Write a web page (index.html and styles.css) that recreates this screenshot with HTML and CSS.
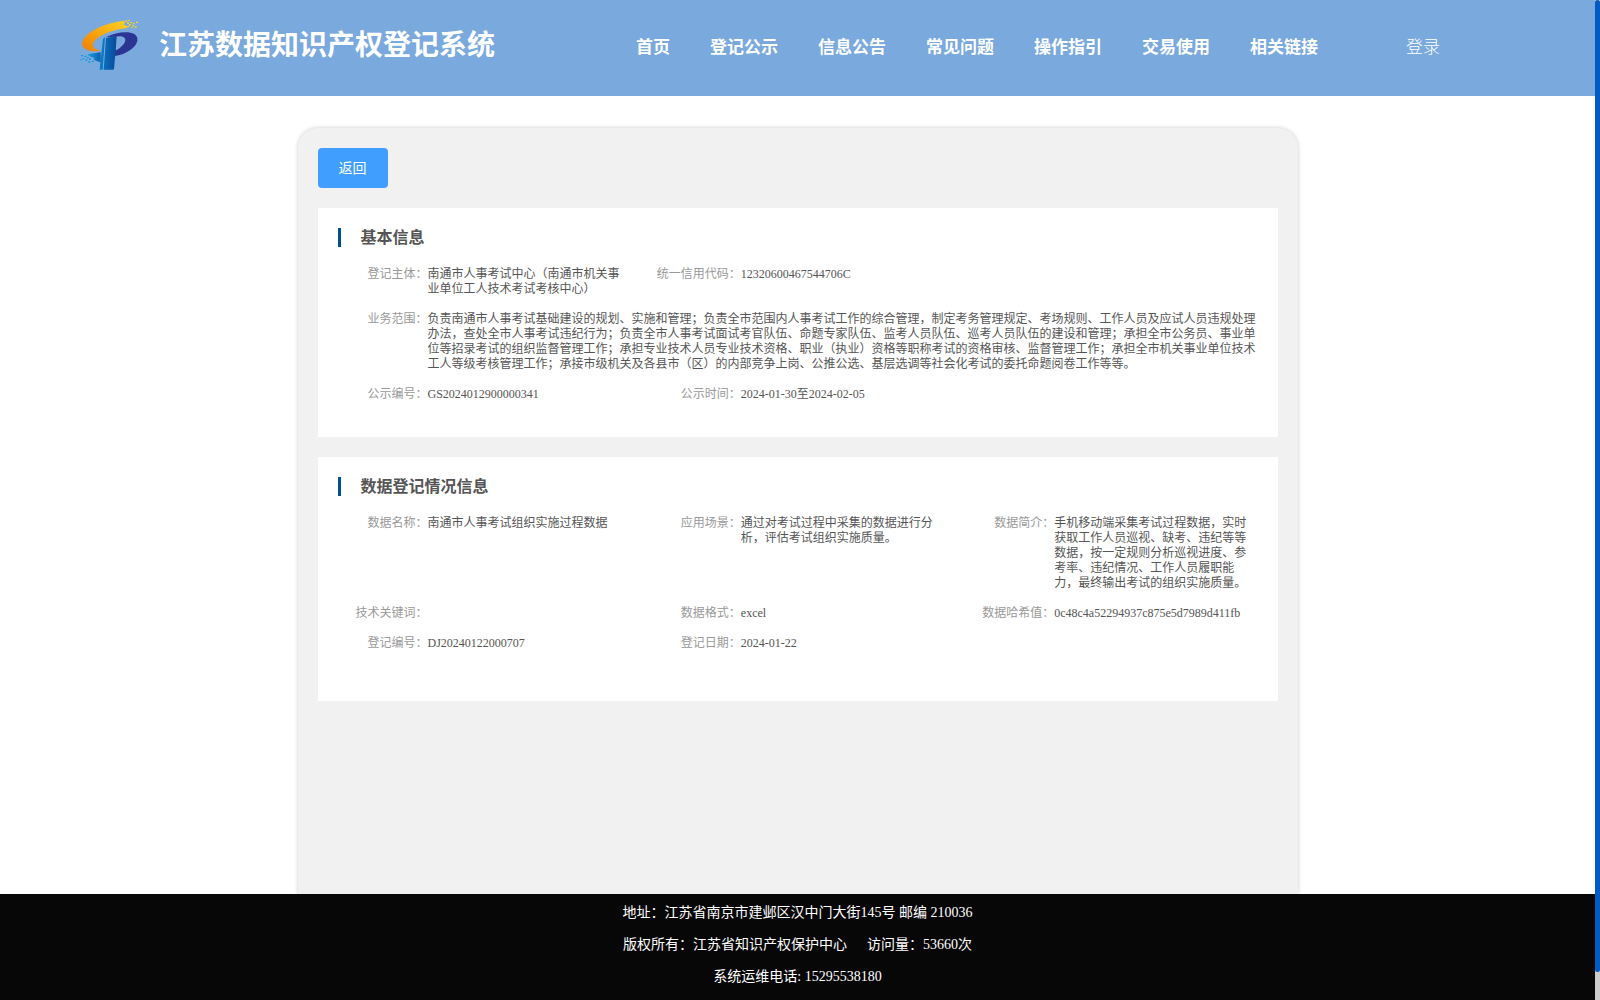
FILE: index.html
```html
<!DOCTYPE html>
<html lang="zh-CN">
<head>
    <meta charset="UTF-8">
    <meta name="viewport" content="width=device-width, initial-scale=1.0">
    <title>江苏数据知识产权登记系统</title>
    <link rel="stylesheet" href="styles.css">
</head>
<body>
    <header class="header">
        <svg class="logo" viewBox="30 28 180 156" aria-hidden="true">
            <defs>
                <linearGradient id="orange" x1="0" y1="1" x2="1" y2="0">
                    <stop offset="0" stop-color="#f07d00"/>
                    <stop offset="1" stop-color="#ffd320"/>
                </linearGradient>
                <linearGradient id="blue" x1="0" y1="0" x2="1" y2="0">
                    <stop offset="0" stop-color="#0a6fbb"/>
                    <stop offset="1" stop-color="#0a4a9c"/>
                </linearGradient>
                <linearGradient id="tail" x1="0" y1="0" x2="1" y2="0">
                    <stop offset="0" stop-color="#16a0e0"/>
                    <stop offset="1" stop-color="#0860ae"/>
                </linearGradient>
            </defs>
            <path fill="url(#orange)" d="M162 33 C112 38 46 64 37 97 C31 118 62 130 92 123 C66 119 62 102 80 87 C100 71 132 60 172 55 L168 47 L160 45 L165 39 Z"/>
            <path fill="#ffd21e" d="M166 32h6v4h-6zM175 30h5v4h-5zM171 38h6v4h-6zM181 37h6v4h-6zM189 40h5v4h-5zM176 43h6v5h-6zM187 46h5v4h-5zM198 36h6v4h-6zM194 50h6v4h-6zM170 49h7v4h-7zM183 51h5v3h-5z"/>
            <path fill="url(#tail)" d="M52 134 L92 128 L92 158 C84 156 76 153 69 149 L75 145 L64 142 L58 139 Z"/>
            <path fill="#169bdb" d="M33 136h6v4h-6zM43 138h6v4h-6zM37 145h5v4h-5zM50 142h6v4h-6zM30 149h5v3h-5zM46 149h6v4h-6zM57 146h6v5h-6zM55 155h6v4h-6zM66 153h5v4h-5z"/>
            <path fill="#0a78c4" d="M99 87 L105 83 L98 180 L89 180 Z"/>
            <path fill="#2c3594" d="M109 82 C135 68 170 64 188 71 C210 80 206 104 182 120 C168 130 151 137 133 139 L136 117 L139 122 C156 112 172 95 164 85 C159 79 150 79 139 81 Z"/>
            <path fill="url(#blue)" d="M108 84 L140 80 L138 110 L132 177 Q132 180 128 180 L101 180 Z"/>
        </svg>
        <div class="site-name">江苏数据知识产权登记系统</div>
        <nav class="nav">
            <a href="#">首页</a>
            <a href="#">登记公示</a>
            <a href="#">信息公告</a>
            <a href="#">常见问题</a>
            <a href="#">操作指引</a>
            <a href="#">交易使用</a>
            <a href="#">相关链接</a>
        </nav>
        <a class="login" href="#">登录</a>
    </header>

    <main class="content">
        <button class="back-btn" type="button">返回</button>

        <section class="panel">
            <h2>基本信息</h2>
            <dl class="info">
                <div class="item"><dt>登记主体：</dt><dd>南通市人事考试中心（南通市机关事业单位工人技术考试考核中心）</dd></div>
                <div class="item"><dt>统一信用代码：</dt><dd>12320600467544706C</dd></div>
                <div class="item full"><dt>业务范围：</dt><dd>负责南通市人事考试基础建设的规划、实施和管理；负责全市范围内人事考试工作的综合管理，制定考务管理规定、考场规则、工作人员及应试人员违规处理办法，查处全市人事考试违纪行为；负责全市人事考试面试考官队伍、命题专家队伍、监考人员队伍、巡考人员队伍的建设和管理；承担全市公务员、事业单位等招录考试的组织监督管理工作；承担专业技术人员专业技术资格、职业（执业）资格等职称考试的资格审核、监督管理工作；承担全市机关事业单位技术工人等级考核管理工作；承接市级机关及各县市（区）的内部竞争上岗、公推公选、基层选调等社会化考试的委托命题阅卷工作等等。</dd></div>
                <div class="item"><dt>公示编号：</dt><dd>GS2024012900000341</dd></div>
                <div class="item"><dt>公示时间：</dt><dd>2024-01-30至2024-02-05</dd></div>
            </dl>
        </section>

        <section class="panel panel-data">
            <h2>数据登记情况信息</h2>
            <dl class="info">
                <div class="item"><dt>数据名称：</dt><dd>南通市人事考试组织实施过程数据</dd></div>
                <div class="item"><dt>应用场景：</dt><dd>通过对考试过程中采集的数据进行分析，评估考试组织实施质量。</dd></div>
                <div class="item"><dt>数据简介：</dt><dd>手机移动端采集考试过程数据，实时获取工作人员巡视、缺考、违纪等等数据，按一定规则分析巡视进度、参考率、违纪情况、工作人员履职能力，最终输出考试的组织实施质量。</dd></div>
                <div class="item"><dt>技术关键词：</dt><dd></dd></div>
                <div class="item"><dt>数据格式：</dt><dd>excel</dd></div>
                <div class="item"><dt>数据哈希值：</dt><dd>0c48c4a52294937c875e5d7989d411fb</dd></div>
                <div class="item"><dt>登记编号：</dt><dd>DJ20240122000707</dd></div>
                <div class="item"><dt>登记日期：</dt><dd>2024-01-22</dd></div>
            </dl>
        </section>
    </main>

    <footer class="footer">
        <p>地址：江苏省南京市建邺区汉中门大街145号 邮编 210036</p>
        <p><span>版权所有：江苏省知识产权保护中心</span><span class="visits">访问量：53660次</span></p>
        <p>系统运维电话: 15295538180</p>
    </footer>

    <div class="scrollbar"><div class="thumb"></div></div>
</body>
</html>
```
FILE: styles.css
```css
* {
    box-sizing: border-box;
}
body {
    margin: 0;
    padding-right: 5px;
    min-height: 100vh;
    display: flex;
    flex-direction: column;
    background: #fff;
    font-family: "Liberation Serif", "Noto Sans CJK SC", serif;
}
.header {
    display: flex;
    align-items: center;
    height: 96px;
    padding: 0 155px 0 80px;
    background: #79a9dd;
    color: #fff;
}
.header a {
    color: #fff;
    text-decoration: none;
    white-space: nowrap;
}
.logo {
    width: 60px;
    height: 52px;
    margin-bottom: 6px;
}
.site-name {
    margin-left: 19px;
    padding-bottom: 4px;
    font-size: 28px;
    font-weight: bold;
    line-height: 40px;
    white-space: nowrap;
}
.nav {
    display: flex;
    gap: 40px;
    margin-left: auto;
    font-size: 17px;
    font-weight: bold;
    line-height: 24px;
}
.login {
    margin-left: 88px;
    font-size: 17px;
    font-weight: 300;
    line-height: 24px;
}

.content {
    flex: 1;
    width: 1000px;
    max-width: 100%;
    margin: 32px auto 0;
    padding: 20px;
    background: #f1f1f1;
    border-radius: 20px 20px 0 0;
    box-shadow: 0 0 4px rgba(0, 0, 0, 0.2);
}
.back-btn {
    display: block;
    width: 70px;
    height: 40px;
    padding: 0 0 2px;
    border: none;
    border-radius: 4px;
    background: #409eff;
    color: #fff;
    font-family: inherit;
    font-size: 14px;
    cursor: pointer;
}
.panel {
    margin-top: 20px;
    padding: 20px 0 35px 20px;
    background: #fff;
}
.panel-data {
    padding-bottom: 50px;
}
.panel h2 {
    margin: 0 0 20px;
    padding-left: 20px;
    border-left: 3px solid #00508e;
    color: #555;
    font-size: 16px;
    font-weight: bold;
    line-height: 19px;
}
.info {
    display: grid;
    grid-template-columns: repeat(3, 1fr);
    row-gap: 15px;
    margin: 0;
    font-size: 12px;
    line-height: 15px;
}
.item {
    display: flex;
    padding-right: 20px;
}
/* keeps the next item on a new row */
.full {
    grid-column: 1 / -1;
}
.item dt {
    flex: 0 0 90px;
    color: #999;
    text-align: right;
    white-space: nowrap;
}
.item dd {
    flex: 1;
    margin: 0;
    color: #555;
}

.footer {
    height: 106px;
    padding-top: 3px;
    background: #070707;
    color: #fff;
    font-size: 14px;
    line-height: 32px;
    text-align: center;
    z-index: 1;
}
.footer p {
    margin: 0;
}
.visits {
    margin-left: 20px;
}

.scrollbar {
    position: fixed;
    top: 0;
    right: 0;
    bottom: 0;
    width: 5px;
    background: #ccc;
}
.thumb {
    height: 97.2%;
    border-radius: 3px;
    background: #005bc4;
}
```
